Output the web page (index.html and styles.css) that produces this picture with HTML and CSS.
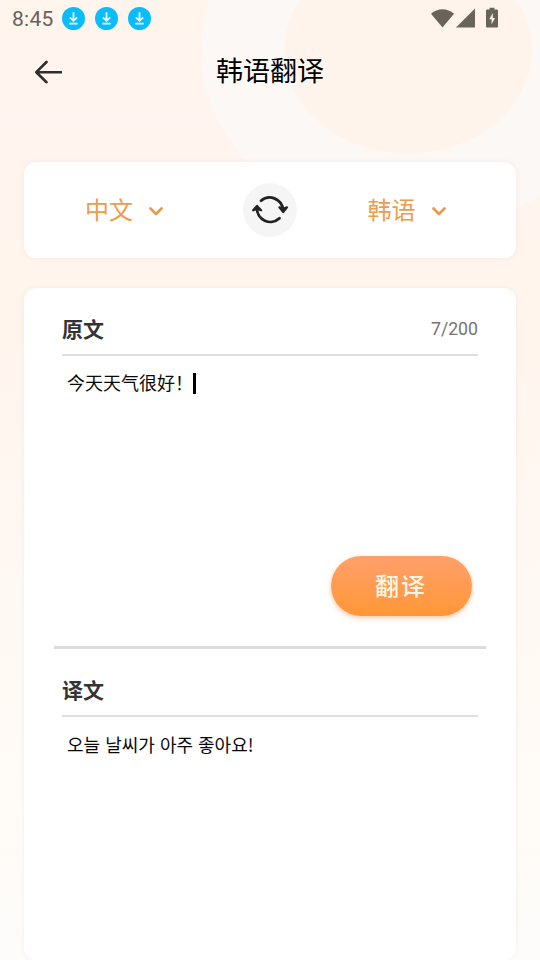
FILE: index.html
```html
<!DOCTYPE html>
<html lang="zh-CN">
<head>
<meta charset="utf-8">
<title>韩语翻译</title>
<link rel="stylesheet" href="styles.css">
</head>
<body>
<div class="screen">
  <div class="status">
    <span class="time">8:45</span>
    <svg class="dl" viewBox="0 0 24 24"><circle cx="12" cy="12" r="12"/><path d="M12 5.500v8.500M8.200 10.800l3.800 3.600 3.800-3.600M7.700 17.300h8.600"/></svg>
    <svg class="dl" viewBox="0 0 24 24"><circle cx="12" cy="12" r="12"/><path d="M12 5.500v8.500M8.200 10.800l3.800 3.600 3.800-3.600M7.700 17.300h8.600"/></svg>
    <svg class="dl" viewBox="0 0 24 24"><circle cx="12" cy="12" r="12"/><path d="M12 5.500v8.500M8.200 10.800l3.800 3.600 3.800-3.600M7.700 17.300h8.600"/></svg>
    <svg class="system" width="68" height="22" viewBox="0 0 68 22">
      <path d="M0 5.700C6.500-.3 16.500-.3 23 5.700L11.500 19.500z"/>
      <path d="M44 .5v19H25z"/>
      <path d="M58.500-.3h5v1.800h2.500q1 0 1 1v16q0 1-1 1h-10q-1 0-1-1v-16q0-1 1-1h2.500z"/>
      <path class="bolt" d="M61.800 5l-3.500 6.300h2.300v5l3.400-6.300h-2.200z"/>
    </svg>
  </div>
  <header class="header">
    <svg class="back" width="28" height="24" viewBox="0 0 28 24"><path d="M27 12.200H2.500M12.500 2L2.300 12.200l10.200 10"/></svg>
    <h1 class="title">韩语翻译</h1>
  </header>
  <section class="languages card">
    <div class="lang"><span class="name">中文</span><svg class="chev" width="14" height="9" viewBox="0 0 14 9"><path d="M1.500 1.500L7 7l5.500-5.500"/></svg></div>
    <div class="swap">
      <svg width="38" height="34" viewBox="0 0 38 34">
        <path d="M10 7.700A13.400 13.400 0 0 1 32 17"/>
        <path d="M28.500 25.300A13.400 13.400 0 0 1 6 15"/>
        <path class="fill" d="M28.400 14.400L32 15.800l4-1.400-3.800 4.600zM2.200 17.300L6 12.900l4.100 4.400L6 15.700z"/>
      </svg>
    </div>
    <div class="lang"><span class="name">韩语</span><svg class="chev" width="14" height="9" viewBox="0 0 14 9"><path d="M1.500 1.500L7 7l5.500-5.500"/></svg></div>
  </section>
  <main class="panel card">
    <section class="source">
      <div class="heading"><h2 class="label">原文</h2><span class="count">7/200</span></div>
      <p class="text"><span>今天天气很好！</span><span class="caret"></span></p>
      <button class="translate" type="button">翻译</button>
    </section>
    <section class="result">
      <div class="heading"><h2 class="label">译文</h2></div>
      <p class="text korean" lang="ko">오늘 날씨가 아주 좋아요!</p>
    </section>
  </main>
</div>
</body>
</html>
```
FILE: styles.css
```css
* { box-sizing: border-box; }
body { margin: 0; }
.screen {
  width: 540px;
  height: 960px;
  overflow: hidden;
  display: flex;
  flex-direction: column;
  font-family: Roboto, "Noto Sans CJK SC", sans-serif;
  background:
    radial-gradient(ellipse 124px 104px at 408px 50px, #fff4eb 99.3%, transparent 100%),
    radial-gradient(ellipse 215px 180px at 415px 50px, #fcf8f6 99.3%, transparent 100%),
    linear-gradient(180deg, #fff5ec 0, #fff4ef 120px, #fff5ec 290px, #fff6f0 430px, #fff9f4 640px, #fffbf6 800px, #fdfcfa 960px);
}
.status {
  height: 37px;
  padding-left: 12px;
  display: flex;
  align-items: center;
  gap: 9px;
}
.time { width: 41px; font-size: 21px; color: #665f5b; letter-spacing: .3px; white-space: nowrap; }
.dl { width: 23px; height: 23px; margin-right: 1px; }
.dl circle { fill: #0bbcfb; }
.dl path { fill: none; stroke: #e9faff; stroke-width: 1.9; }
.system { margin-left: auto; margin-right: 41px; overflow: visible; fill: #68645c; }
.system .bolt { fill: #fff4ea; }
.header {
  height: 70px;
  padding: 0 34px;
  display: grid;
  grid-template-columns: 28px 1fr 28px;
  align-items: center;
}
.back { fill: none; stroke: #302e2d; stroke-width: 2.6; stroke-linecap: round; stroke-linejoin: round; }
.title { margin: 0; text-align: center; font-size: 27px; line-height: 40px; font-weight: 400; color: #000; }
.card {
  margin: 0 24px;
  background: #fff;
  border-radius: 12px;
  box-shadow: 0 0 5px rgba(160, 100, 70, .09);
}
.languages {
  height: 96px;
  flex: none;
  margin-top: 55px;
  display: grid;
  grid-template-columns: 1fr 54px 1fr;
  align-items: center;
}
.lang {
  display: flex;
  align-items: center;
  justify-content: center;
  gap: 16px;
  font-size: 24px;
  line-height: 34px;
  color: #ed9c4b;
}
.lang:first-child { padding-right: 19px; }
.name { padding-top: 2px; }
.chev { margin-top: 3px; fill: none; stroke: #e79b4e; stroke-width: 2.7; stroke-linecap: round; stroke-linejoin: round; }
.swap { width: 54px; height: 54px; border-radius: 50%; background: #f5f5f5; display: grid; place-items: center; }
.swap svg { fill: none; stroke: #222; stroke-width: 2.8; stroke-linecap: round; stroke-linejoin: round; }
.swap .fill { fill: #222; stroke-width: 2.2; }
.panel { height: 672px; flex: none; margin-top: 30px; padding: 0 30px; }
.source { height: 361px; padding: 0 8px; border-bottom: 3px solid #dcdcdc; display: flex; flex-direction: column; }
.result { padding: 0 8px; }
.heading {
  height: 68px;
  padding-top: 16px;
  display: flex;
  align-items: center;
  justify-content: space-between;
  border-bottom: 2px solid #dedede;
}
.label { margin: 0; padding-top: 2px; font-size: 21px; line-height: 30px; font-weight: 700; color: #343434; }
.count { font-size: 17.7px; color: #747474; }
.text { margin: 13px 5px 0; display: flex; align-items: center; height: 28px; font-size: 18px; line-height: 28px; color: #090909; }
.text span:first-child { padding-top: 2px; }
.caret { width: 3px; height: 21px; background: #000; }
.korean { font-family: "Noto Sans CJK KR", sans-serif; font-size: 18px; }
.translate {
  width: 141px;
  height: 60px;
  margin: auto 6px 30px auto;
  padding: 2px 1px 0 0;
  border: 0;
  border-radius: 30px;
  background: linear-gradient(180deg, #ffa06b, #ff9736);
  box-shadow: 0 2px 5px rgba(237, 120, 45, .4);
  color: #fff7e5;
  font: 500 24px/34px Roboto, "Noto Sans CJK SC", sans-serif;
  letter-spacing: 2px;
}
```
